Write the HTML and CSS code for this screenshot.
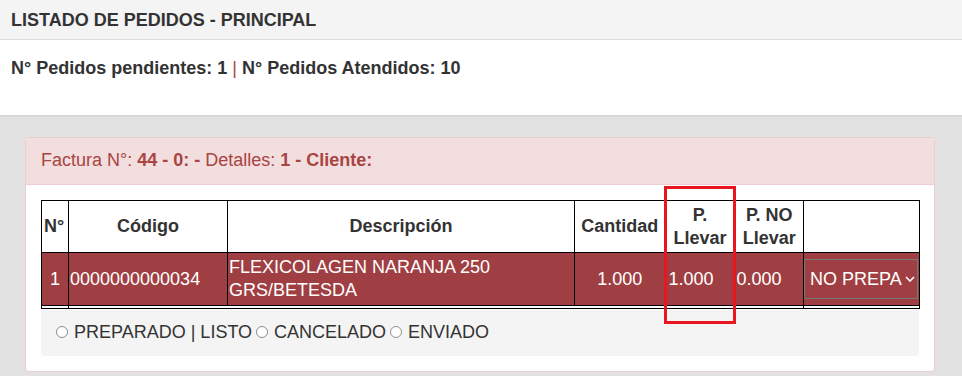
FILE: index.html
```html
<!DOCTYPE html>
<html lang="es">

<head>
    <meta charset="UTF-8">
    <title>Listado de Pedidos</title>
    <link rel="stylesheet" href="styles.css">
</head>

<body>
    <div class="top">
        <div class="title">LISTADO DE PEDIDOS - PRINCIPAL</div>
        <div class="counts">N° Pedidos pendientes: 1 <span class="sep">|</span> N° Pedidos Atendidos: 10</div>
    </div>

    <div class="content">
        <div class="panel">
            <div class="panel-heading">
                Factura N°: <b>44 - 0: -</b> Detalles: <b>1 - Cliente:</b>
            </div>
            <div class="panel-body">
                <div class="mark-wrap">
                    <table class="pedidos">
                        <thead>
                            <tr>
                                <th class="c-num">N°</th>
                                <th class="c-cod">Código</th>
                                <th class="c-desc">Descripción</th>
                                <th class="c-cant nb">Cantidad</th>
                                <th class="c-llevar nb">P.<br>Llevar</th>
                                <th class="c-nollevar nb">P. NO<br>Llevar</th>
                                <th class="c-estado"></th>
                            </tr>
                        </thead>
                        <tbody>
                            <tr class="fila">
                                <td class="center">1</td>
                                <td>0000000000034</td>
                                <td>FLEXICOLAGEN NARANJA 250<br>GRS/BETESDA</td>
                                <td class="center nb">1.000</td>
                                <td class="nb llevar">1.000</td>
                                <td class="nb">0.000</td>
                                <td class="estado">
                                    <div class="select">
                                        <span>NO PREPA</span>
                                        <svg width="10" height="6" viewBox="0 0 10 6">
                                            <path d="M1 1 L5 5 L9 1" fill="none" stroke="#fff" stroke-width="1.6" />
                                        </svg>
                                    </div>
                                </td>
                            </tr>
                            <tr class="spacer">
                                <td></td>
                                <td class="nb"></td>
                                <td class="nb"></td>
                                <td class="nb"></td>
                                <td class="nb"></td>
                                <td class="nb"></td>
                                <td></td>
                            </tr>
                        </tbody>
                    </table>
                    <!-- highlight box -->
                    <div class="mark"></div>
                </div>
                <div class="estados"><span class="radio first"></span>PREPARADO | LISTO<span class="radio"></span>CANCELADO<span class="radio"></span>ENVIADO</div>
            </div>
        </div>
    </div>
</body>

</html>
```

FILE: styles.css
```css
* {
    padding: 0;
    margin: 0;
    box-sizing: border-box;
}

body {
    font-family: "Liberation Sans", Arial, sans-serif;
    font-size: 18px;
    line-height: 20px;
    color: #333;
    background-color: #e2e2e2;
    height: 376px;
    overflow: hidden;
}

.top {
    background-color: #fff;
}

.title {
    height: 40px;
    padding: 10px 11px 0;
    background-color: #f4f4f4;
    border-bottom: 1px solid #dcdcdc;
    font-weight: bold;
}

.counts {
    height: 75px;
    padding: 18px 11px 0;
    font-weight: bold;
}

.sep {
    color: #a94442;
    font-weight: normal;
}

.content {
    border-top: 2px solid #d8d8d8;
    padding: 20px 27px 0 25px;
}

.panel {
    background-color: #fff;
    border: 1px solid #ebccd1;
    border-radius: 4px;
    height: 235px;
}

.panel-heading {
    height: 47px;
    padding: 12px 15px 0;
    background-color: #f2dede;
    border-bottom: 1px solid #ebccd1;
    color: #a94442;
    border-radius: 3px 3px 0 0;
}

.panel-body {
    padding: 15px 15px 0;
}

.mark-wrap {
    position: relative;
}

.pedidos {
    width: 878px;
    border-collapse: collapse;
    border: 1px solid #000;
    table-layout: fixed;
}

.pedidos th,
.pedidos td {
    border: 1px solid #000;
    padding: 0 1px;
    line-height: 23px;
    text-align: left;
    vertical-align: middle;
}

.pedidos th {
    height: 52px;
    text-align: center;
    font-weight: bold;
}

.pedidos th.c-num {
    padding: 0 2px;
    text-align: left;
}

.pedidos .nb {
    border-left: none;
    border-right: none;
}

.c-num { width: 27px; }
.c-cod { width: 159px; }
.c-desc { width: 347px; }
.c-cant { width: 90px; }
.c-llevar { width: 71px; }
.c-nollevar { width: 68px; }
.c-estado { width: 116px; }

.fila td {
    height: 53px;
    background-color: #a03f43;
    color: #fff;
}

.pedidos td.center {
    text-align: center;
}

.pedidos td.llevar {
    padding-left: 4px;
}

.pedidos td.estado {
    padding: 0;
}

.select {
    display: flex;
    align-items: center;
    justify-content: space-between;
    height: 40px;
    width: 114px;
    padding: 0 5px 0 5px;
    border: 1px solid #777;
    overflow: hidden;
    white-space: nowrap;
}

.select svg {
    flex-shrink: 0;
    margin-left: 3px;
}

.spacer td {
    height: 3px;
    line-height: 0;
    border-top: 1px solid #000;
}

.mark {
    position: absolute;
    left: 623px;
    top: -14px;
    width: 72px;
    height: 138px;
    border: 3px solid #e8161e;
}

.estados {
    height: 46px;
    margin-top: 1px;
    padding: 12px 15px 0;
    background-color: #f4f4f4;
    border-radius: 0 0 4px 4px;
    width: 878px;
}

.radio {
    display: inline-block;
    width: 12px;
    height: 12px;
    margin: 0 6px 0 4px;
    border: 1px solid #8f8f8f;
    border-radius: 50%;
    background-color: #fff;
}

.radio.first {
    margin-left: 0;
}
```
